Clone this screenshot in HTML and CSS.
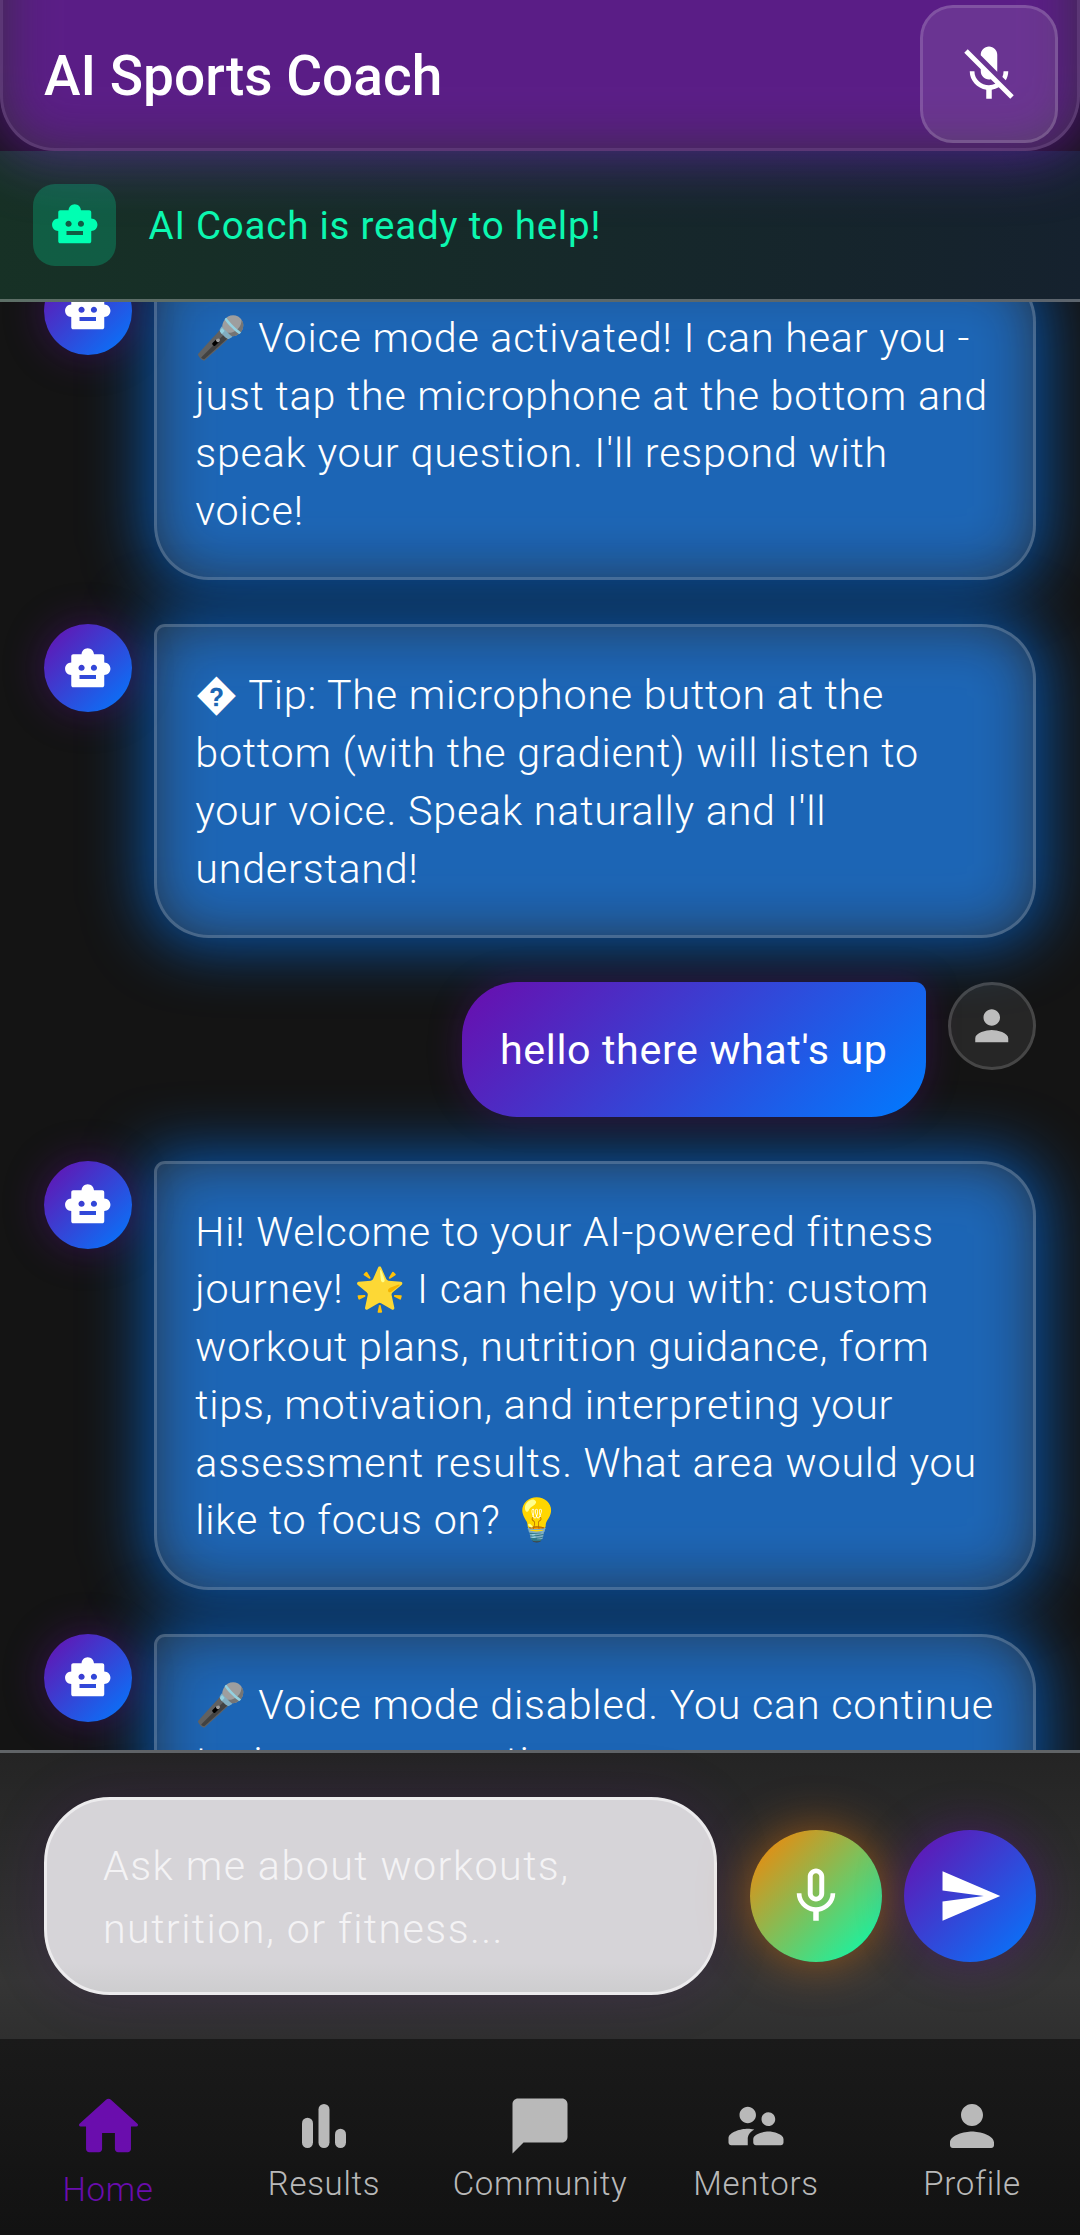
FILE: index.html
```html
<!DOCTYPE html>
<html lang="en">
<head>
<meta charset="utf-8">
<title>AI Sports Coach</title>
<link rel="stylesheet" href="styles.css">
</head>
<body>
<svg class="defs" width="0" height="0">
  <symbol id="robot" viewBox="0 0 24 24"><path fill-rule="evenodd" d="M20 9V6c0-.6-.4-1-1-1h-4c0-1.660-1.340-3-3-3S9 3.340 9 5H5c-.6 0-1 .4-1 1v3c-1.660 0-3 1.340-3 3s1.340 3 3 3v5c0 .6.4 1 1 1h14c.6 0 1-.4 1-1v-5c1.660 0 3-1.340 3-3s-1.340-3-3-3zM7.500 11.500c0-.83.67-1.500 1.500-1.500s1.500.67 1.500 1.500S9.830 13 9 13s-1.500-.67-1.500-1.500zM16 17H8v-2h8v2zm-1-4c-.83 0-1.500-.67-1.500-1.500S14.170 10 15 10s1.500.67 1.500 1.500S15.830 13 15 13z"/></symbol>
</svg>

<header class="header">
  <h1 class="title">AI Sports Coach</h1>
  <button class="voice-toggle" aria-label="Voice off">
    <svg class="icon" viewBox="0 0 24 24"><path d="M19 11h-1.700c0 .74-.16 1.430-.43 2.050l1.230 1.230c.56-.98.9-2.090.9-3.280zm-4.020.17c0-.06.02-.11.02-.17V5c0-1.660-1.340-3-3-3S9 3.340 9 5v.18l5.980 5.990zM4.270 3L3 4.270l6.010 6.010V11c0 1.660 1.330 3 2.990 3 .22 0 .44-.03.65-.08l1.660 1.660c-.71.33-1.500.52-2.310.52-2.760 0-5.300-2.100-5.300-5.100H5c0 3.410 2.720 6.230 6 6.720V21h2v-3.280c.91-.13 1.770-.45 2.540-.9L19.730 21 21 19.730 4.270 3z"/></svg>
  </button>
</header>

<section class="status">
  <span class="status-badge"><svg class="icon-sm"><use href="#robot"/></svg></span>
  <p class="status-text">AI Coach is ready to help!</p>
</section>

<main class="chat">
  <div class="messages">
    <div class="row">
      <span class="avatar bot"><svg class="icon-sm"><use href="#robot"/></svg></span>
      <p class="bubble">🎤 Voice mode activated! I can hear you -<br>just tap the microphone at the bottom and<br>speak your question. I'll respond with<br>voice!</p>
    </div>
    <div class="row">
      <span class="avatar bot"><svg class="icon-sm"><use href="#robot"/></svg></span>
      <p class="bubble">� Tip: The microphone button at the<br>bottom (with the gradient) will listen to<br>your voice. Speak naturally and I'll<br>understand!</p>
    </div>
    <div class="row mine">
      <p class="bubble-mine">hello there what's up</p>
      <span class="avatar person"><svg class="icon-sm" viewBox="0 0 24 24"><path d="M12 12c2.210 0 4-1.790 4-4s-1.790-4-4-4-4 1.790-4 4 1.790 4 4 4zm0 2c-2.670 0-8 1.340-8 4v2h16v-2c0-2.660-5.330-4-8-4z"/></svg></span>
    </div>
    <div class="row">
      <span class="avatar bot"><svg class="icon-sm"><use href="#robot"/></svg></span>
      <p class="bubble">Hi! Welcome to your AI-powered fitness<br>journey! 🌟 I can help you with: custom<br>workout plans, nutrition guidance, form<br>tips, motivation, and interpreting your<br>assessment results. What area would you<br>like to focus on? 💡</p>
    </div>
    <div class="row">
      <span class="avatar bot"><svg class="icon-sm"><use href="#robot"/></svg></span>
      <p class="bubble">🎤 Voice mode disabled. You can continue<br>typing your questions.</p>
    </div>
  </div>
</main>

<section class="composer">
  <div class="field">Ask me about workouts,<br>nutrition, or fitness...</div>
  <button class="round mic" aria-label="Speak">
    <svg class="icon" viewBox="0 0 24 24"><path d="M12 14c1.660 0 2.990-1.340 2.990-3L15 5c0-1.660-1.340-3-3-3S9 3.340 9 5v6c0 1.660 1.340 3 3 3zm-1.200-9.100c0-.66.54-1.200 1.200-1.200.66 0 1.200.54 1.200 1.200l-.01 6.200c0 .66-.53 1.200-1.190 1.200-.66 0-1.200-.54-1.200-1.200V4.900zm6.500 6.100c0 3-2.540 5.100-5.300 5.100S6.700 14 6.700 11H5c0 3.410 2.720 6.230 6 6.720V21h2v-3.280c3.280-.48 6-3.300 6-6.720h-1.700z"/></svg>
  </button>
  <button class="round send" aria-label="Send">
    <svg class="icon" viewBox="0 0 24 24"><path d="M2.010 21L23 12 2.010 3 2 10l15 2-15 2z"/></svg>
  </button>
</section>

<nav class="nav">
  <a class="tab active"><svg class="icon-lg" viewBox="0 0 24 24"><path d="M10 19v-5h4v5c0 .55.45 1 1 1h3c.55 0 1-.45 1-1v-7h1.700c.46 0 .68-.57.33-.87L12.670 3.600c-.38-.34-.96-.34-1.340 0l-8.360 7.530c-.34.3-.13.87.33.87H5v7c0 .55.45 1 1 1h3c.55 0 1-.45 1-1z"/></svg><span>Home</span></a>
  <a class="tab"><svg class="icon" viewBox="0 0 24 24"><rect x="4" y="9" width="4" height="11" rx="2"/><rect x="10" y="4" width="4" height="16" rx="2"/><rect x="16" y="13" width="4" height="7" rx="2"/></svg><span>Results</span></a>
  <a class="tab"><svg class="icon" viewBox="0 0 24 24"><path d="M20 2H4c-1.100 0-2 .9-2 2v18l4-4h14c1.100 0 2-.9 2-2V4c0-1.100-.9-2-2-2z"/></svg><span>Community</span></a>
  <a class="tab"><svg class="icon" viewBox="0 0 24 24"><path d="M16.500 12c1.380 0 2.490-1.120 2.490-2.500S17.880 7 16.500 7C15.120 7 14 8.120 14 9.500s1.120 2.500 2.500 2.500zM9 11c1.660 0 2.990-1.340 2.990-3S10.660 5 9 5C7.340 5 6 6.340 6 8s1.340 3 3 3zm7.500 3c-1.830 0-5.500.92-5.500 2.750V18c0 .55.45 1 1 1h9c.55 0 1-.45 1-1v-1.250c0-1.830-3.670-2.750-5.500-2.750zM9 13c-2.330 0-7 1.170-7 3.500V18c0 .55.45 1 1 1h6v-2.250c0-.85.33-2.340 2.370-3.470C10.500 13.100 9.660 13 9 13z"/></svg><span>Mentors</span></a>
  <a class="tab"><svg class="icon" viewBox="0 0 24 24"><path d="M12 12c2.210 0 4-1.790 4-4s-1.790-4-4-4-4 1.790-4 4 1.790 4 4 4zm0 2c-2.670 0-8 1.340-8 4v1c0 .55.45 1 1 1h14c.55 0 1-.45 1-1v-1c0-2.660-5.330-4-8-4z"/></svg><span>Profile</span></a>
</nav>
</body>
</html>
```

FILE: styles.css
```css
* { box-sizing: border-box; }

body {
  margin: 0;
  width: 1080px;
  height: 2235px;
  overflow: hidden;
  display: flex;
  flex-direction: column;
  background: #141414;
  color: #fff;
  font-family: Roboto, "Noto Color Emoji", sans-serif;
}

h1, p { margin: 0; }

button {
  padding: 0;
  border: 0;
  flex: none;
  display: grid;
  place-items: center;
  color: #fff;
}

svg { display: block; fill: currentColor; }
.defs { position: absolute; }
.icon { width: 66px; height: 66px; }
.icon-sm { width: 49.5px; height: 49.5px; }
.icon-lg { width: 77px; height: 77px; }

/* Header */
.header {
  position: relative;
  isolation: isolate;
  flex: none;
  height: 151px;
  padding: 5px 19px 5px 41px;
  display: flex;
  align-items: flex-start;
  justify-content: space-between;
  border: 3px solid rgba(255, 255, 255, .15);
  border-width: 0 3px 3px;
  border-radius: 0 0 55px 55px;
  background: rgba(255, 255, 255, .125);
}
.header::before {
  content: "";
  position: absolute;
  z-index: -1;
  inset: -120px -9px -9px;
  border-radius: 55px;
  background: rgba(110, 20, 176, .68);
  filter: blur(30px);
}
.title {
  padding-top: 38px;
  font-size: 55px;
  line-height: 66px;
  font-weight: 500;
}
.voice-toggle {
  width: 138px;
  height: 138px;
  border: 3px solid rgba(255, 255, 255, .15);
  border-radius: 33px;
  background: rgba(255, 255, 255, .1);
}

/* Status strip */
.status {
  position: relative;
  flex: none;
  height: 151px;
  padding: 0 33px;
  display: flex;
  align-items: center;
  gap: 33px;
  border-bottom: 3px solid rgba(255, 255, 255, .3);
  background: linear-gradient(90deg, rgba(40, 255, 160, .12), rgba(30, 140, 255, .11));
}
.status-badge {
  width: 82.5px;
  height: 82.5px;
  display: grid;
  place-items: center;
  border-radius: 22px;
  background: rgba(0, 255, 178, .22);
  color: #00ffb2;
}
.status-text {
  font-size: 38.5px;
  letter-spacing: .77px;
  color: #0cf7b0;
}

/* Conversation */
.chat {
  position: relative;
  isolation: isolate;
  flex: 1;
  min-height: 0;
  overflow: hidden;
}
.messages {
  margin-top: -35.25px;
  padding: 0 44px;
  display: flex;
  flex-direction: column;
  gap: 44px;
}
.row {
  display: flex;
  align-items: flex-start;
  gap: 22px;
}
.mine { justify-content: flex-end; }
.avatar {
  flex: none;
  width: 88px;
  height: 88px;
  display: grid;
  place-items: center;
  border-radius: 50%;
}
.bot {
  background: linear-gradient(135deg, #6a0dad, #007bff);
  box-shadow: 0 0 40px rgba(106, 13, 173, .4);
}
.person {
  border: 3px solid rgba(255, 255, 255, .15);
  background: rgba(255, 255, 255, .08);
  color: #bdbdbd;
}
.bubble, .bubble-mine {
  font-size: 41.25px;
  line-height: 57.75px;
  white-space: nowrap;
}
.bubble {
  position: relative;
  flex: 1;
  min-width: 0;
  padding: 40px 38.25px 36.5px;
  border: 3px solid rgba(255, 255, 255, .17);
  border-radius: 11px 55px 55px 55px;
  background: rgba(255, 255, 255, .09);
  font-weight: 300;
  letter-spacing: .78px;
}
.bubble::before {
  content: "";
  position: absolute;
  z-index: -1;
  inset: -9px;
  border-radius: inherit;
  background: rgba(0, 122, 255, .66);
  filter: blur(32px);
}
.bubble-mine {
  padding: 40px 38.5px 37px;
  border-radius: 55px 11px 55px 55px;
  background: linear-gradient(135deg, #6a0dad, #007bff);
  box-shadow: 0 0 34px rgba(106, 13, 173, .3);
  letter-spacing: .6px;
}

/* Composer */
.composer {
  position: relative;
  flex: none;
  height: 289px;
  padding: 0 44px;
  display: flex;
  align-items: center;
  border-top: 3px solid #606467;
  background: linear-gradient(#242424, #353535 80%, #2f2f2f);
}
.field {
  width: 672.5px;
  height: 198px;
  margin-right: 33.5px;
  padding: 34.5px 56px;
  border: 3px solid #ecebed;
  border-radius: 66px;
  background: linear-gradient(#d6d4d8 85%, #cdcdcf);
  box-shadow: 0 0 60px rgba(106, 13, 173, .14);
  color: #f4f3f5;
  font-size: 41.25px;
  line-height: 63px;
  font-weight: 300;
  letter-spacing: 1.42px;
  white-space: nowrap;
}
.round {
  width: 132px;
  height: 132px;
  border-radius: 50%;
}
.mic {
  margin-right: 22px;
  background: linear-gradient(135deg, #ff8000, #00ffb2);
  box-shadow: 0 0 48px rgba(255, 128, 0, .5);
}
.send {
  background: linear-gradient(135deg, #6a0dad, #007bff);
  box-shadow: 0 0 48px rgba(106, 13, 173, .4);
}

/* Bottom navigation */
.nav {
  position: relative;
  flex: none;
  height: 196px;
  padding-top: 54px;
  display: grid;
  grid-template-columns: repeat(5, 1fr);
  background: linear-gradient(#1a1a1a, #121212);
}
.tab {
  display: flex;
  flex-direction: column;
  align-items: center;
  gap: 6px;
  color: #b9b9b9;
  font-size: 33px;
  line-height: 38px;
  font-weight: 300;
  letter-spacing: .7px;
}
.active { color: #6a0dad; margin-top: -5px; }
```
